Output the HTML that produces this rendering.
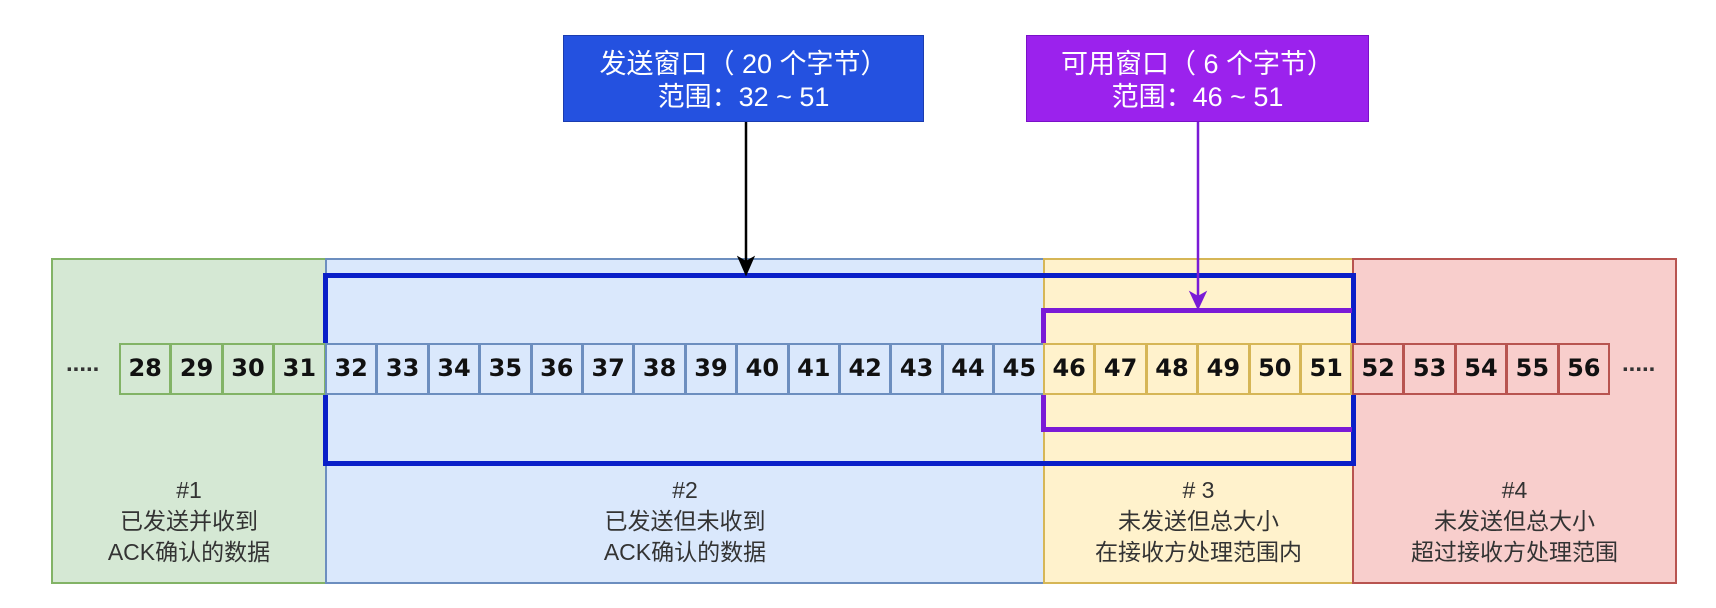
<!DOCTYPE html>
<html><head><meta charset="utf-8"><style>
body{margin:0;width:1716px;height:608px;background:#fff;position:relative;overflow:hidden;font-family:"Liberation Sans","Noto Sans CJK SC",sans-serif}
.a{position:absolute;box-sizing:border-box}
.reg{border:2px solid}
.c{position:absolute;top:343px;height:52px;box-sizing:border-box;border:2px solid;text-align:center;font:bold 24px "DejaVu Sans",sans-serif;line-height:47px;color:#111}
.t{position:absolute;text-align:center;font-size:23px;line-height:31px;color:#333;top:475px}
.box{position:absolute;color:#fff;text-align:center;font-size:27px;line-height:33px;padding-top:12px;box-sizing:border-box}
.dots{position:absolute;top:350px;font:bold 24px sans-serif;color:#333;letter-spacing:0px}
</style></head><body>
<div class="a reg" style="left:51px;top:258px;width:276px;height:326px;background:#d5e8d4;border-color:#82b366"></div>
<div class="a reg" style="left:325px;top:258px;width:720px;height:326px;background:#dae8fc;border-color:#6c8ebf"></div>
<div class="a reg" style="left:1043px;top:258px;width:311px;height:326px;background:#fff2cc;border-color:#d6b656"></div>
<div class="a reg" style="left:1352px;top:258px;width:325px;height:326px;background:#f8cecc;border-color:#b85450"></div>
<div class="t" style="left:51px;width:276px">#1<br>已发送并收到<br>ACK确认的数据</div>
<div class="t" style="left:325px;width:720px">#2<br>已发送但未收到<br>ACK确认的数据</div>
<div class="t" style="left:1043px;width:311px"># 3<br>未发送但总大小<br>在接收方处理范围内</div>
<div class="t" style="left:1352px;width:325px">#4<br>未发送但总大小<br>超过接收方处理范围</div>
<div class="dots" style="left:66px">.....</div>
<div class="dots" style="left:1622px">.....</div>
<!-- blue window -->
<div class="a" style="left:323px;top:273px;width:1033px;height:193px;border:5px solid #0a1fc8"></div>
<!-- purple window -->
<div class="a" style="left:1041px;top:308px;width:315px;height:124px;border:5px solid #7a1bd6;border-right-color:#0a1fc8;border-right:none;width:311px"></div>
<div id="cells"></div>
<script>
var s='';var cfg=[[28,31,'#d5e8d4','#82b366',119],[32,45,'#dae8fc','#6c8ebf',325],[46,51,'#fff2cc','#d6b656',1043],[52,56,'#f8cecc','#b85450',1352]];
cfg.forEach(function(g){for(var n=g[0];n<=g[1];n++){var x=g[4]+(n-g[0])*51.4;s+='<div class="c" style="left:'+x+'px;width:52.4px;background:'+g[2]+';border-color:'+g[3]+'">'+n+'</div>';}});
document.getElementById('cells').innerHTML=s;
</script>
<div class="box" style="left:563px;top:35px;width:361px;height:87px;background:#2451e0;border:1px solid #1a3cb0">发送窗口（ 20 个字节）<br>范围：32 ~ 51</div>
<div class="box" style="left:1026px;top:35px;width:343px;height:87px;background:#9b22ed;border:1px solid #7a10c8">可用窗口（ 6 个字节）<br>范围：46 ~ 51</div>
<svg class="a" style="left:0;top:0" width="1716" height="608">
<line x1="746" y1="122" x2="746" y2="262" stroke="#000" stroke-width="2.5"/>
<path d="M739 258 L746 274 L753 258 L746 262 Z" fill="#000" stroke="#000" stroke-width="2"/>
<line x1="1198" y1="122" x2="1198" y2="296" stroke="#7a1bd6" stroke-width="2.5"/>
<path d="M1191 293 L1198 308 L1205 293 L1198 297 Z" fill="#7a1bd6" stroke="#7a1bd6" stroke-width="2"/>
</svg>
</body></html>
